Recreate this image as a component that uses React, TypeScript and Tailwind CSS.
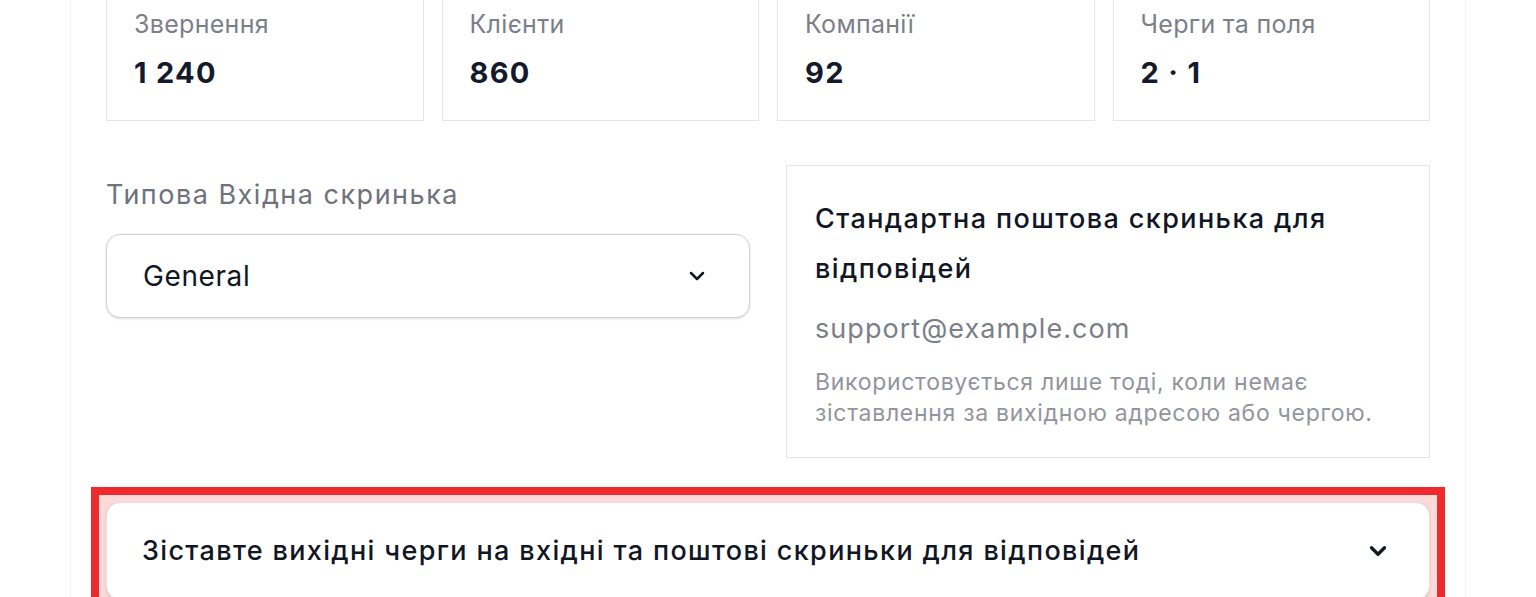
import { ChevronDown } from "lucide-react";

const stats = [
  { label: "Звернення", value: "1 240" },
  { label: "Клієнти", value: "860" },
  { label: "Компанії", value: "92" },
  { label: "Черги та поля", value: "2 · 1" },
];

export default function App() {
  return (
    <div
      className="h-[597px] overflow-hidden bg-white"
      style={{ fontFamily: "Inter, 'Noto Sans', sans-serif" }}
    >
      <div className="mx-[70px] min-h-full border-x border-[#f1f2f4] px-[35px] pb-[40px]">
        <div className="-mt-[22px] grid grid-cols-4 gap-[18px]">
          {stats.map((s) => (
            <div key={s.label} className="border border-[#e3e5e9] bg-white px-[27px] pt-[29px] pb-[29px]">
              <div className="text-[25px] leading-[32px] tracking-[0.3px] text-[#7b7f89]">{s.label}</div>
              <div className="mt-[15px] text-[29px] font-bold leading-[36px] tracking-[1.3px] text-[#141a2b]">
                {s.value}
              </div>
            </div>
          ))}
        </div>

        <div className="mt-[44px] grid grid-cols-2 gap-[36px]">
          <div className="pt-[12px]">
            <div className="text-[27px] leading-[36px] tracking-[1.5px] text-[#6e727c]">Типова Вхідна скринька</div>
            <button className="mt-[21px] flex h-[84px] w-full items-center justify-between rounded-[14px] border border-[#cfd2d7] bg-white pl-[36px] pr-[40px] shadow-sm">
              <span className="text-[28px] tracking-[0.6px] text-[#111624]">General</span>
              <ChevronDown className="h-[24px] w-[24px] text-[#111624]" strokeWidth={2.5} />
            </button>
          </div>

          <div className="border border-[#e3e5e9] px-[28px] py-[28px]">
            <div className="text-[27px] font-medium leading-[50px] tracking-[1.4px] text-[#111624]">
              Стандартна поштова скринька для відповідей
            </div>
            <div className="mt-[17px] text-[27px] leading-[36px] tracking-[1.05px] text-[#7b7f89]">
              support@example.com
            </div>
            <div className="mt-[20px] text-[23px] leading-[31px] tracking-[0.7px] text-[#92959d]">
              Використовується лише тоді, коли немає зіставлення за вихідною адресою або чергою.
            </div>
          </div>
        </div>

        <div className="-mx-[15px] mt-[29px] border-[8px] border-[#ee2a2e] bg-[#fcdada] p-[7px]">
          <div className="flex h-[98px] items-center justify-between rounded-[14px] border border-[#eadede] bg-white pl-[35px] pr-[38px] shadow-sm">
            <span className="text-[27px] font-medium tracking-[1.35px] text-[#111624]">
              Зіставте вихідні черги на вхідні та поштові скриньки для відповідей
            </span>
            <ChevronDown className="h-[26px] w-[26px] text-[#111624]" strokeWidth={3} />
          </div>
        </div>
      </div>
    </div>
  );
}
